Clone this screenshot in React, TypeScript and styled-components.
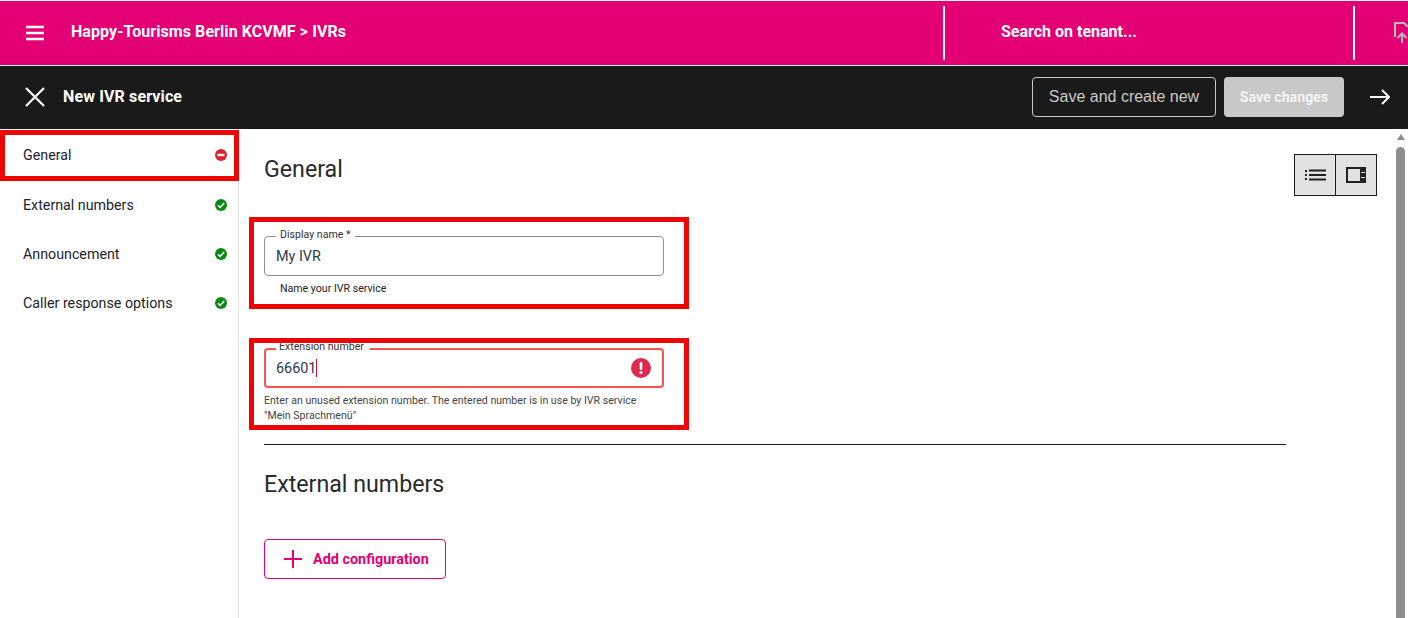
import React from "react";
import styled, { createGlobalStyle } from "styled-components";

const Global = createGlobalStyle`
  html, body { margin: 0; padding: 0; background: #fff; overflow: hidden; }
  * { box-sizing: border-box; }
  body { font-family: Roboto, "Noto Sans", sans-serif; color: #1b1b1b; }
`;

const Page = styled.div`
  width: 1408px;
  height: 618px;
  display: flex;
  flex-direction: column;
  overflow: hidden;
  padding-top: 1px;
`;

const TopBar = styled.header`
  height: 64px;
  flex: none;
  background: #e20074;
  color: #fff;
  display: flex;
  align-items: center;
  padding-left: 25px;
  overflow: hidden;
`;

const IconSlot = styled.span`
  display: flex;
  flex: none;
`;

const Breadcrumb = styled.div`
  margin: 0 0 4px 26px;
  width: 872px;
  flex: none;
  font: 700 16px Roboto, sans-serif;
  letter-spacing: 0.07px;
`;

const VDivider = styled.div`
  width: 2px;
  height: 54px;
  background: #fff;
  flex: none;
`;

const Search = styled.div`
  width: 408px;
  flex: none;
  margin-bottom: 4px;
  padding-left: 56px;
  font: 700 16px Roboto, sans-serif;
`;

const UploadSlot = styled.span`
  display: flex;
  flex: none;
  margin-left: 39px;
`;

const ActionBar = styled.div`
  margin-top: 1px;
  height: 63px;
  flex: none;
  background: #1a1a1a;
  color: #fff;
  display: flex;
  align-items: center;
  padding: 0 0 2px 24px;
`;

const ActionTitle = styled.div`
  margin-left: 17px;
  font: 700 16px Roboto, sans-serif;
  letter-spacing: 0.13px;
  flex: 1;
`;

const OutlineButton = styled.button`
  width: 184px;
  height: 40px;
  border: 1px solid #c8c8c8;
  border-radius: 4px;
  background: transparent;
  color: #c8c8c8;
  font: 400 16px "Liberation Sans", Arial, sans-serif;
  padding: 0;
`;

const DisabledButton = styled.button`
  width: 120px;
  height: 40px;
  margin-left: 8px;
  border: 0;
  border-radius: 4px;
  background: #c8c8c8;
  color: #f4f4f4;
  font: 700 14.2px Roboto, sans-serif;
  padding: 0;
`;

const ArrowSlot = styled.span`
  display: flex;
  margin: 0 18px 0 26px;
`;

const Body = styled.div`
  flex: 1;
  min-height: 0;
  display: flex;
`;

const Sidebar = styled.nav`
  width: 239px;
  flex: none;
  border-right: 1px solid #e4e4e4;
  padding-top: 1px;
`;

const NavItem = styled.div<{ $marked?: boolean; $h: number }>`
  height: ${(p) => p.$h}px;
  display: flex;
  align-items: center;
  justify-content: space-between;
  padding: 0 ${(p) => (p.$marked ? 7 : 11)}px ${(p) => (p.$marked ? 1 : 2)}px ${(p) => (p.$marked ? 18 : 23)}px;
  font: 400 14.25px Roboto, sans-serif;
  color: #20242c;
  ${(p) => (p.$marked ? "border: 5px solid #ee0505; width: 239px;" : "")}
`;

const Main = styled.main`
  flex: 1;
  min-width: 0;
  padding: 0 0 0 10px;
  position: relative;
`;

const Section = styled.section`
  width: 1037px;
`;

const SectionHead = styled.div`
  display: flex;
  justify-content: space-between;
  height: 88px;
  padding: 24px 0 0 15px;
  width: 1128px;
`;

const Heading = styled.h2`
  margin: 0;
  font: 400 23.2px/32px Roboto, sans-serif;
  color: #2a2a2a;
`;

const ViewToggle = styled.div`
  display: flex;
  height: 42px;
  margin-top: 1px;
  border: 1px solid #1a1a1a;
  background: #e2e2e2;
`;

const ToggleCell = styled.span`
  width: 40px;
  display: flex;
  align-items: center;
  justify-content: center;
  & + & { width: 41px; border-left: 1px solid #1a1a1a; }
`;

const MarkBox = styled.div<{ $h: number; $top: number }>`
  width: 440px;
  height: ${(p) => p.$h}px;
  border: 5px solid #ee0505;
  padding: ${(p) => p.$top}px 10px 0;
  overflow: hidden;
`;

const FieldFrame = styled.div<{ $error?: boolean }>`
  position: relative;
  width: 400px;
  height: 40px;
  border: ${(p) => (p.$error ? 2 : 1)}px solid ${(p) => (p.$error ? "#f9524f" : "#8f8f8f")};
  border-radius: 4px;
  display: flex;
  align-items: center;
  justify-content: space-between;
  padding: 0 ${(p) => (p.$error ? "11px 0 10px" : "11px")};
  font: 400 14.4px Roboto, sans-serif;
  color: #2b3a4a;
`;

const FloatingLabel = styled.span<{ $error?: boolean }>`
  position: absolute;
  left: ${(p) => (p.$error ? 10 : 11)}px;
  top: ${(p) => (p.$error ? -11 : -10)}px;
  padding: 0 ${(p) => (p.$error ? "6px 0 3px" : "4px")};
  background: #fff;
  font: 400 10.6px/16px Roboto, sans-serif;
  color: #333;
`;

const Caret = styled.span`
  display: inline-block;
  width: 1px;
  height: 18px;
  background: #c8102e;
  vertical-align: -4px;
`;

const Helper = styled.div<{ $indent?: boolean; $muted?: boolean }>`
  margin-top: 5px;
  padding-left: ${(p) => (p.$indent ? 16 : 0)}px;
  font: 400 10.6px/15px Roboto, sans-serif;
  color: ${(p) => (p.$muted ? "#444" : "#222")};
`;

const Gap = styled.div`
  height: 29px;
`;

const Rule = styled.hr`
  margin: 14px 0 0 15px;
  width: 1022px;
  border: 0;
  border-top: 1px solid #1a1a1a;
`;

const SubHeading = styled(Heading)`
  margin: 23px 0 0 15px;
`;

const AddButton = styled.button`
  margin: 39px 0 0 15px;
  width: 182px;
  height: 40px;
  display: flex;
  align-items: center;
  gap: 11px;
  padding: 0 0 0 19px;
  background: #fff;
  border: 1px solid #e20074;
  border-radius: 4px;
  color: #e20074;
  font: 700 14.4px Roboto, sans-serif;
`;

const Scrollbar = styled.div`
  position: absolute;
  right: 3px;
  top: 0;
  bottom: 0;
  width: 9px;
  display: flex;
  flex-direction: column;
  align-items: center;
`;

const ScrollArrow = styled.span`
  margin-top: 5px;
  width: 0;
  height: 0;
  border-left: 4px solid transparent;
  border-right: 4px solid transparent;
  border-bottom: 6px solid #8a8a8a;
`;

const ScrollThumb = styled.span`
  margin-top: 7px;
  width: 9px;
  flex: 1;
  background: #8e8e8e;
  border-radius: 5px 5px 0 0;
`;

const Menu = () => (
  <svg width="20" height="16" viewBox="0 0 20 16" fill="none" stroke="#fff" strokeWidth="2.4">
    <path d="M1 2h18M1 8h18M1 14h18" />
  </svg>
);
const Close = () => (
  <svg width="22" height="22" viewBox="0 0 22 22" fill="none" stroke="#fff" strokeWidth="2.2">
    <path d="M2 2l18 18M20 2L2 20" />
  </svg>
);
const Arrow = () => (
  <svg width="20" height="16" viewBox="0 0 20 16" fill="none" stroke="#fff" strokeWidth="2">
    <path d="M0 8h19M12 1l7 7-7 7" />
  </svg>
);
const Upload = () => (
  <svg width="22" height="22" viewBox="0 0 22 22" fill="none" stroke="#b9b9b9" strokeWidth="2">
    <path d="M1 15V1h9l3 3h6" />
    <path d="M8 21V12M3.5 16L8 11.5 12.5 16" />
  </svg>
);
const Blocked = () => (
  <svg width="12" height="12" viewBox="0 0 12 12">
    <circle cx="6" cy="6" r="6" fill="#e0202e" />
    <rect x="2.5" y="4.8" width="7" height="2.4" fill="#fff" />
  </svg>
);
const Ok = () => (
  <svg width="12" height="12" viewBox="0 0 12 12">
    <circle cx="6" cy="6" r="6" fill="#0a8a14" />
    <path d="M3 6.3l2.1 2.1L9.2 4" fill="none" stroke="#fff" strokeWidth="1.5" />
  </svg>
);
const Alert = () => (
  <svg width="20" height="20" viewBox="0 0 20 20">
    <circle cx="10" cy="10" r="10" fill="#dc2a4a" />
    <rect x="8.7" y="4" width="2.6" height="8" rx="1" fill="#fff" />
    <circle cx="10" cy="14.6" r="1.5" fill="#fff" />
  </svg>
);
const ListView = () => (
  <svg width="21" height="12" viewBox="0 0 21 12" fill="#222">
    <rect x="0" y="1" width="2" height="2" />
    <rect x="0" y="5" width="2" height="2" />
    <rect x="0" y="9" width="2" height="2" />
    <rect x="4" y="0.5" width="17" height="2" />
    <rect x="4" y="5" width="17" height="2" />
    <rect x="4" y="9.5" width="17" height="2" />
  </svg>
);
const PanelView = () => (
  <svg width="20" height="16" viewBox="0 0 20 16">
    <rect x="1" y="1" width="18" height="14" fill="none" stroke="#222" strokeWidth="2" />
    <rect x="14" y="1" width="5" height="14" fill="#222" />
    <rect x="15" y="5" width="4" height="1" fill="#e2e2e2" />
    <rect x="15" y="10" width="4" height="1" fill="#e2e2e2" />
  </svg>
);
const Plus = () => (
  <svg width="18" height="18" viewBox="0 0 18 18" stroke="#e20074" strokeWidth="2" fill="none">
    <path d="M9 0v18M0 9h18" />
  </svg>
);

export default function App() {
  return (
    <Page>
      <Global />
      <TopBar>
        <IconSlot><Menu /></IconSlot>
        <Breadcrumb>Happy-Tourisms Berlin KCVMF &gt; IVRs</Breadcrumb>
        <VDivider />
        <Search>Search on tenant...</Search>
        <VDivider />
        <UploadSlot><Upload /></UploadSlot>
      </TopBar>
      <ActionBar>
        <IconSlot><Close /></IconSlot>
        <ActionTitle>New IVR service</ActionTitle>
        <OutlineButton>Save and create new</OutlineButton>
        <DisabledButton>Save changes</DisabledButton>
        <ArrowSlot><Arrow /></ArrowSlot>
      </ActionBar>
      <Body>
        <Sidebar>
          <NavItem $marked $h={51}>General<Blocked /></NavItem>
          <NavItem $h={49}>External numbers<Ok /></NavItem>
          <NavItem $h={49}>Announcement<Ok /></NavItem>
          <NavItem $h={49}>Caller response options<Ok /></NavItem>
        </Sidebar>
        <Main>
          <Section>
            <SectionHead>
              <Heading>General</Heading>
              <ViewToggle>
                <ToggleCell><ListView /></ToggleCell>
                <ToggleCell><PanelView /></ToggleCell>
              </ViewToggle>
            </SectionHead>
            <MarkBox $h={92} $top={14}>
              <FieldFrame>
                <FloatingLabel>Display name *</FloatingLabel>
                My IVR
              </FieldFrame>
              <Helper $indent>Name your IVR service</Helper>
            </MarkBox>
            <Gap />
            <MarkBox $h={92} $top={5}>
              <FieldFrame $error>
                <FloatingLabel $error>Extension number</FloatingLabel>
                <span>66601<Caret /></span>
                <Alert />
              </FieldFrame>
              <Helper $muted>
                Enter an unused extension number. The entered number is in use by IVR service
                <br />
                "Mein Sprachmenü"
              </Helper>
            </MarkBox>
            <Rule />
            <SubHeading>External numbers</SubHeading>
            <AddButton><Plus />Add configuration</AddButton>
          </Section>
          <Scrollbar>
            <ScrollArrow />
            <ScrollThumb />
          </Scrollbar>
        </Main>
      </Body>
    </Page>
  );
}
